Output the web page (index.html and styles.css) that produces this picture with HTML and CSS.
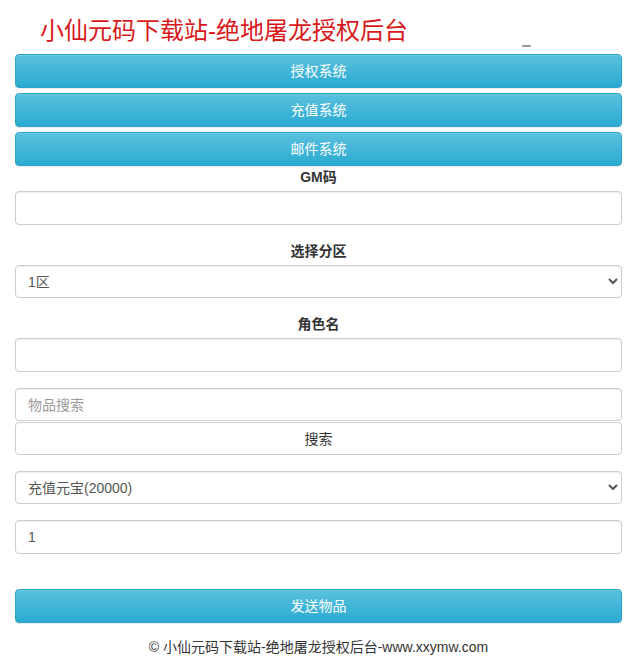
FILE: index.html
```html
<!DOCTYPE html>
<html lang="zh-CN">

<head>
  <meta charset="UTF-8">
  <title>小仙元码下载站-绝地屠龙授权后台</title>
  <link rel="stylesheet" href="styles.css">
</head>

<body>
  <div class="container">
    <div class="header">
      <h1 class="logo">小仙元码下载站-绝地屠龙授权后台</h1>
      <span class="mark"></span>
    </div>

    <div class="nav">
      <button class="btn btn-info">授权系统</button>
      <button class="btn btn-info">充值系统</button>
      <button class="btn btn-info">邮件系统</button>
    </div>

    <form class="mail-form">
      <div class="form-group">
        <label for="gmcode">GM码</label>
        <input type="text" id="gmcode" class="form-control">
      </div>

      <div class="form-group">
        <label for="area">选择分区</label>
        <select id="area" class="form-control">
          <option>1区</option>
        </select>
      </div>

      <div class="form-group">
        <label for="role">角色名</label>
        <input type="text" id="role" class="form-control">
      </div>

      <div class="form-group search-group">
        <input type="text" class="form-control" placeholder="物品搜索">
        <button type="button" class="btn btn-default">搜索</button>
      </div>

      <div class="form-group">
        <select class="form-control">
          <option>充值元宝(20000)</option>
        </select>
      </div>

      <div class="form-group">
        <input type="text" class="form-control" value="1">
      </div>

      <button type="button" class="btn btn-info send">发送物品</button>
    </form>

    <p class="footer">© 小仙元码下载站-绝地屠龙授权后台-www.xxymw.com</p>
  </div>
</body>

</html>
```

FILE: styles.css
```css
* {
  box-sizing: border-box;
}

body {
  margin: 0;
  font-family: "Liberation Sans", "Noto Sans CJK SC", sans-serif;
  font-size: 14px;
  line-height: 20px;
  color: #333;
  background: #fff;
}

.container {
  padding: 0 15px;
}

.header {
  position: relative;
  height: 54px;
}

.logo {
  margin: 0;
  padding: 16px 0 0 25px;
  font-size: 24px;
  line-height: 30px;
  font-weight: normal;
  color: #d7191c;
}

/* little grey dash at the right of the title */
.mark {
  position: absolute;
  left: 507px;
  top: 45px;
  width: 9px;
  height: 2px;
  background: #999;
  border-radius: 1px;
}

.btn {
  display: block;
  width: 100%;
  height: 34px;
  padding: 6px 12px;
  font-family: inherit;
  font-size: 14px;
  line-height: 20px;
  border: 1px solid transparent;
  border-radius: 4px;
  cursor: pointer;
}

.btn-info {
  color: #fff;
  background-image: linear-gradient(to bottom, #5bc0de 0, #2aabd2 100%);
  border-color: #28a4c9;
  box-shadow: inset 0 1px 0 rgba(255, 255, 255, .15), 0 1px 1px rgba(0, 0, 0, .075);
}

.btn-default {
  color: #333;
  background: #fff;
  border-color: #ccc;
}

.nav {
  display: flex;
  flex-direction: column;
  gap: 5px;
}

.mail-form {
  padding-top: 1px;
}

.form-group {
  margin-bottom: 16px;
}

.form-group label {
  display: block;
  text-align: center;
  font-weight: bold;
  margin-bottom: 4px;
}

.form-control {
  display: block;
  width: 100%;
  height: 34px;
  padding: 6px 12px;
  font-family: inherit;
  font-size: 14px;
  line-height: 20px;
  color: #555;
  background: #fff;
  border: 1px solid #ccc;
  border-radius: 4px;
  box-shadow: inset 0 1px 1px rgba(0, 0, 0, .075);
}

.form-control::placeholder {
  color: #999;
}

select.form-control {
  height: 33px;
  padding: 6px 8px;
}

.search-group .form-control {
  height: 33px;
}

.search-group .btn {
  margin-top: 1px;
  height: 33px;
}

.send {
  margin-top: 35px;
}

.footer {
  margin: 14px 0 0;
  text-align: center;
}
```
